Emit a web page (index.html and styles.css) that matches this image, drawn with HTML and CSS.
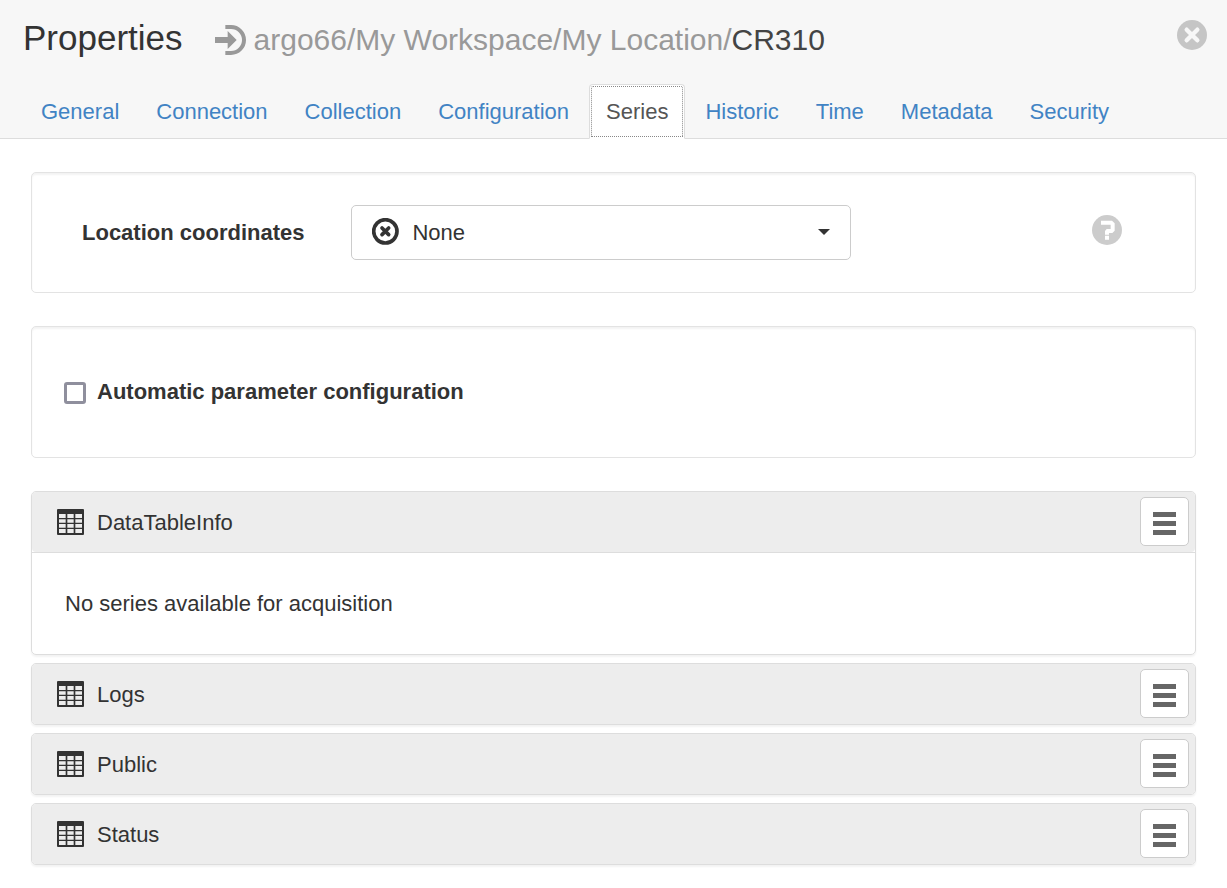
FILE: index.html
```html
<!DOCTYPE html>
<html lang="en">
<head>
    <meta charset="UTF-8">
    <title>Properties</title>
    <meta name="viewport" content="width=device-width, initial-scale=1">
    <link rel="stylesheet" href="styles.css">
</head>
<body>
    <svg class="sprite" aria-hidden="true">
        <symbol id="icon-table" viewBox="0 0 81 78">
            <path fill-rule="evenodd" d="M3 0H78Q81 0 81 3V75Q81 78 78 78H3Q0 78 0 75V3Q0 0 3 0zM6 15V27H26V15zM31 15V27H50V15zM55 15V27H75V15zM6 31V41H26V31zM31 31V41H50V31zM55 31V41H75V31zM6 45V56H26V45zM31 45V56H50V45zM55 45V56H75V45zM6 60V72H26V60zM31 60V72H50V60zM55 60V72H75V60z"/>
        </symbol>
    </svg>

    <header class="header">
        <div class="title-row">
            <h1>Properties</h1>
            <div class="path">
                <svg class="path-icon" viewBox="0 0 93 90" aria-hidden="true">
                    <path d="M0 36H38V18L65 45L38 72V54H0zM31 0H48a45 45 0 0 1 0 90H31V78H48a33 33 0 0 0 0-66H31z"/>
                </svg>
                <span>argo66/My Workspace/My Location/<b>CR310</b></span>
            </div>
            <button type="button" class="close" aria-label="Close">
                <svg viewBox="0 0 90 90" aria-hidden="true">
                    <circle cx="45" cy="45" r="45" fill="#c5c5c5"/>
                    <path d="M29 29L61 61M61 29L29 61" stroke="#f7f7f7" stroke-width="13" stroke-linecap="round"/>
                </svg>
            </button>
        </div>
        <nav class="tabs">
            <a href="#">General</a>
            <a href="#">Connection</a>
            <a href="#">Collection</a>
            <a href="#">Configuration</a>
            <a href="#" class="active">Series</a>
            <a href="#">Historic</a>
            <a href="#">Time</a>
            <a href="#">Metadata</a>
            <a href="#">Security</a>
        </nav>
    </header>

    <main class="content">
        <section class="well coordinates">
            <label for="coordinates">Location coordinates</label>
            <div class="select">
                <select id="coordinates">
                    <option>None</option>
                </select>
                <svg class="select-icon" viewBox="0 0 81 81" aria-hidden="true">
                    <circle cx="40" cy="40" r="35" fill="none" stroke="#333" stroke-width="11"/>
                    <path d="M30 30L50 50M50 30L30 50" stroke="#333" stroke-width="11" stroke-linecap="round"/>
                </svg>
                <svg class="caret" viewBox="0 0 12 6" aria-hidden="true"><path d="M0 0H12L6 6z"/></svg>
            </div>
            <button type="button" class="help" aria-label="Help">
                <svg viewBox="0 0 90 90" aria-hidden="true">
                    <circle cx="45" cy="45" r="45" fill="#ccc"/>
                    <path d="M27 17H60L68 25V47L61 54H51V59H39V48L44 42H56V29H27zM39 62H51V74H39z" fill="#fff"/>
                </svg>
            </button>
        </section>

        <section class="well automatic">
            <input type="checkbox" id="automatic">
            <label for="automatic">Automatic parameter configuration</label>
        </section>

        <div class="tables">
            <section class="panel">
                <div class="panel-heading">
                    <svg class="table-icon" aria-hidden="true"><use href="#icon-table"/></svg>
                    <h2>DataTableInfo</h2>
                    <button type="button" class="menu" aria-label="DataTableInfo menu"><span></span><span></span><span></span></button>
                </div>
                <p class="panel-body">No series available for acquisition</p>
            </section>
            <section class="panel">
                <div class="panel-heading">
                    <svg class="table-icon" aria-hidden="true"><use href="#icon-table"/></svg>
                    <h2>Logs</h2>
                    <button type="button" class="menu" aria-label="Logs menu"><span></span><span></span><span></span></button>
                </div>
            </section>
            <section class="panel">
                <div class="panel-heading">
                    <svg class="table-icon" aria-hidden="true"><use href="#icon-table"/></svg>
                    <h2>Public</h2>
                    <button type="button" class="menu" aria-label="Public menu"><span></span><span></span><span></span></button>
                </div>
            </section>
            <section class="panel">
                <div class="panel-heading">
                    <svg class="table-icon" aria-hidden="true"><use href="#icon-table"/></svg>
                    <h2>Status</h2>
                    <button type="button" class="menu" aria-label="Status menu"><span></span><span></span><span></span></button>
                </div>
            </section>
        </div>
    </main>
</body>
</html>
```
FILE: styles.css
```css
* {
    box-sizing: border-box;
}
body {
    margin: 0;
    background: #fff;
    color: #333;
    font-family: "Liberation Sans", Arial, sans-serif;
    font-size: 22px;
    line-height: 33px;
}
svg {
    display: block;
}
.sprite {
    position: absolute;
    width: 0;
    height: 0;
}
button {
    padding: 0;
    border: none;
    background: none;
    cursor: pointer;
}

/* Header */
.header {
    padding-top: 18px;
    background: #f7f7f7;
}
.title-row {
    display: flex;
    align-items: flex-start;
    padding: 0 20px 0 23px;
    margin-bottom: 24px;
    line-height: 40px;
}
h1 {
    margin: 0 32px 0 0;
    font-size: 35px;
    font-weight: normal;
}
.path {
    display: flex;
    align-items: center;
    gap: 8px;
    padding-top: 2px;
    color: #999;
    font-size: 30px;
}
.path b {
    color: #444;
    font-weight: normal;
}
.path-icon {
    width: 31px;
    height: 30px;
    fill: #999;
}
.close {
    width: 30px;
    height: 30px;
    margin: 2px 0 0 auto;
}
.tabs {
    display: flex;
    gap: 3px;
    padding: 0 24px;
    border-bottom: 1px solid #ddd;
}
.tabs a {
    padding: 10px 16px;
    margin-bottom: -1px;
    border: 1px solid transparent;
    border-radius: 4px 4px 0 0;
    color: #4183c4;
    text-decoration: none;
}
.tabs .active {
    border-color: #ddd;
    border-bottom-color: #fff;
    background: #fff;
    color: #555;
    outline: 1px dotted #888;
    outline-offset: -3px;
}

/* Settings */
.content {
    display: flex;
    flex-direction: column;
    gap: 33px;
    padding: 33px 31px 20px;
}
.well {
    display: flex;
    align-items: center;
    border: 1px solid #e3e3e3;
    border-radius: 5px;
    box-shadow: inset 0 2px 2px rgba(0,0,0,0.05);
}
.well label {
    font-weight: bold;
}
.coordinates {
    gap: 47px;
    padding: 32px 73px 32px 50px;
}
.select {
    position: relative;
    flex: 0 1 500px;
}
.select select {
    display: block;
    width: 100%;
    height: 55px;
    padding: 0 60px;
    border: 1px solid #ccc;
    border-radius: 5px;
    background: #fff;
    color: #333;
    font: inherit;
    appearance: none;
}
.select-icon,
.caret {
    position: absolute;
    pointer-events: none;
}
.select-icon {
    top: 13px;
    left: 21px;
    width: 27px;
    height: 27px;
}
.caret {
    top: 24px;
    right: 21px;
    width: 12px;
    height: 6px;
    fill: #333;
}
.help {
    width: 30px;
    height: 30px;
    margin: 0 0 5px auto;
}
.automatic {
    gap: 11px;
    padding: 48px 32px 49px;
}
.automatic input {
    width: 22px;
    height: 22px;
    margin: 3px 0 0;
    border: 3px solid #8f8f9d;
    border-radius: 3px;
    background: #fff;
    appearance: none;
}
.automatic input:checked {
    background: #4183c4;
}

/* Data tables */
.tables {
    display: flex;
    flex-direction: column;
    gap: 8px;
}
.panel {
    border: 1px solid #ddd;
    border-radius: 5px;
    box-shadow: 0 2px 2px rgba(0,0,0,0.05);
}
.panel-heading {
    display: flex;
    align-items: center;
    gap: 13px;
    min-height: 60px;
    padding: 5px 6px 5px 25px;
    border-radius: 4px;
    background: #ededed;
}
.panel-heading h2 {
    margin: 0;
    font-size: 22px;
    font-weight: normal;
}
.table-icon {
    width: 27px;
    height: 26px;
    fill: #333;
}
.menu {
    display: flex;
    flex-direction: column;
    align-items: center;
    align-self: flex-start;
    justify-content: center;
    gap: 4px;
    width: 49px;
    height: 49px;
    padding-top: 4px;
    margin-left: auto;
    border: 1px solid #ccc;
    border-radius: 5px;
    background: #fff;
}
.menu span {
    width: 23px;
    height: 5px;
    background: #666;
}
.panel-body {
    margin: 0;
    padding: 34px 33px;
    border-top: 1px solid #ddd;
}
```
